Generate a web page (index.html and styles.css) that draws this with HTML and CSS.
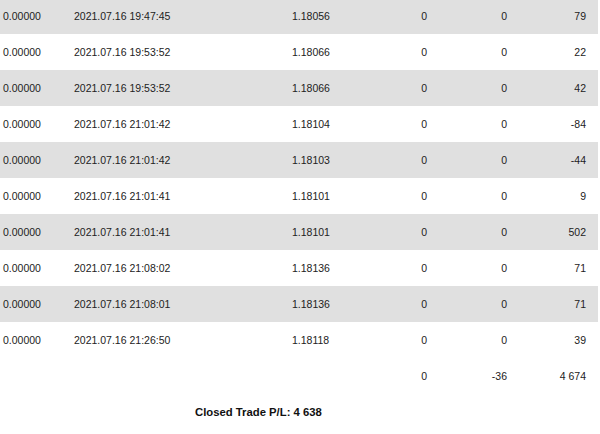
FILE: index.html
```html
<!DOCTYPE html>
<html>
<head>
<meta charset="utf-8">
<link rel="stylesheet" href="styles.css">
</head>
<body>
<table class="trades">
  <colgroup>
    <col class="w-sl"><col class="w-time"><col class="w-price"><col class="w-comm"><col class="w-swap"><col class="w-pl">
  </colgroup>
  <tbody>
    <tr><td>0.00000</td><td>2021.07.16 19:47:45</td><td>1.18056</td><td class="r c4">0</td><td class="r c5">0</td><td class="r c6">79</td></tr>
    <tr><td>0.00000</td><td>2021.07.16 19:53:52</td><td>1.18066</td><td class="r c4">0</td><td class="r c5">0</td><td class="r c6">22</td></tr>
    <tr><td>0.00000</td><td>2021.07.16 19:53:52</td><td>1.18066</td><td class="r c4">0</td><td class="r c5">0</td><td class="r c6">42</td></tr>
    <tr><td>0.00000</td><td>2021.07.16 21:01:42</td><td>1.18104</td><td class="r c4">0</td><td class="r c5">0</td><td class="r c6">-84</td></tr>
    <tr><td>0.00000</td><td>2021.07.16 21:01:42</td><td>1.18103</td><td class="r c4">0</td><td class="r c5">0</td><td class="r c6">-44</td></tr>
    <tr><td>0.00000</td><td>2021.07.16 21:01:41</td><td>1.18101</td><td class="r c4">0</td><td class="r c5">0</td><td class="r c6">9</td></tr>
    <tr><td>0.00000</td><td>2021.07.16 21:01:41</td><td>1.18101</td><td class="r c4">0</td><td class="r c5">0</td><td class="r c6">502</td></tr>
    <tr><td>0.00000</td><td>2021.07.16 21:08:02</td><td>1.18136</td><td class="r c4">0</td><td class="r c5">0</td><td class="r c6">71</td></tr>
    <tr><td>0.00000</td><td>2021.07.16 21:08:01</td><td>1.18136</td><td class="r c4">0</td><td class="r c5">0</td><td class="r c6">71</td></tr>
    <tr><td>0.00000</td><td>2021.07.16 21:26:50</td><td>1.18118</td><td class="r c4">0</td><td class="r c5">0</td><td class="r c6">39</td></tr>
  </tbody>
  <tfoot>
    <tr><td></td><td></td><td></td><td class="r c4">0</td><td class="r c5">-36</td><td class="r c6">4 674</td></tr>
  </tfoot>
</table>
<div class="summary">Closed Trade P/L: 4 638</div>
</body>
</html>
```
FILE: styles.css
```css
html, body {
  margin: 0;
  padding: 0;
  background: #ffffff;
}
body {
  font-family: "Liberation Sans", Arial, sans-serif;
  font-size: 10.5px;
  color: #222222;
  width: 600px;
  overflow: hidden;
}
.trades {
  width: 598px;
  margin-top: -2px;
  border-collapse: collapse;
  border-spacing: 0;
  table-layout: fixed;
}
.w-sl { width: 71px; }
.w-time { width: 218px; }
.w-price { width: 81px; }
.w-comm { width: 67px; }
.w-swap { width: 80px; }
.w-pl { width: 81px; }
.trades td {
  height: 36px;
  padding: 0 0 0 3px;
  vertical-align: middle;
  white-space: nowrap;
  box-sizing: border-box;
}
.trades tbody tr:nth-child(odd) td {
  background: #e0e0e0;
}
.trades td.r {
  text-align: right;
  padding-left: 0;
}
.trades td.c4 { padding-right: 10px; }
.trades td.c5 { padding-right: 10px; }
.trades td.c6 { padding-right: 12px; }
.summary {
  height: 36px;
  line-height: 36px;
  padding-left: 195px;
  font-weight: bold;
  font-size: 11.3px;
  color: #111111;
}
```
